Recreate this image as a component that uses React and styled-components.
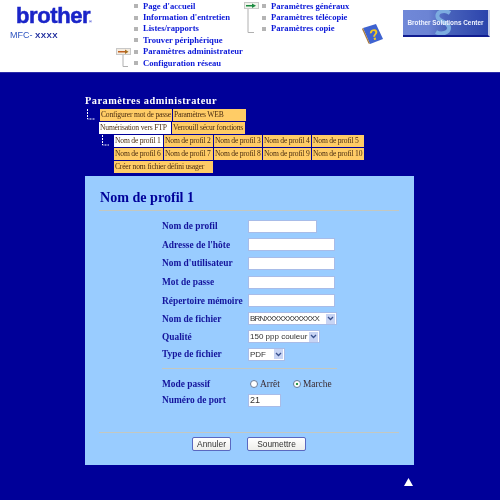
import React from "react";
import styled, { createGlobalStyle } from "styled-components";

const Global = createGlobalStyle`
  html, body { margin: 0; padding: 0; background: #000099; }
  body { width: 500px; height: 500px; overflow: hidden; font-family: "Liberation Serif", serif; }
  * { box-sizing: border-box; }
`;
const Page = styled.div`width: 500px; height: 500px; background: #000099; display: flex; flex-direction: column; filter: blur(0.3px);`;
const Header = styled.header`height: 73px; background: #fff; border-bottom: 1px solid #2a2aa8; display: flex; flex: none;`;
const Brand = styled.div`width: 116px; padding: 4px 0 0 16px; flex: none;`;
const LogoText = styled.div`font: bold 22px/24px "Liberation Sans", sans-serif; color: #1a24c8; letter-spacing: -0.4px; -webkit-text-stroke: 0.5px #1a24c8; position: relative; width: 72px;`;
const Registered = styled.span`position: absolute; left: 73px; top: 15px; font: bold 4px/6px "Liberation Sans", sans-serif; letter-spacing: 0; -webkit-text-stroke: 0;`;
const Model = styled.div`margin: 1px 0 0 -6px; font: 9px/12px "Liberation Sans", sans-serif; color: #2f55c0; white-space: nowrap; b { color: #1c2a9c; font-weight: bold; font-size: 8px; letter-spacing: 0.4px; }`;
const NavCol = styled.nav`width: ${p => p.$w}px; flex: none; padding-top: 0.5px;`;
const NavRow = styled.div`height: 11.4px; display: flex; align-items: center; white-space: nowrap;`;
const Gutter = styled.span`width: 14px; height: 8px; margin-right: 4px; flex: none; display: block;
  svg { display: block; overflow: visible; }`;
const Bullet = styled.span`width: 4px; height: 4px; background: #b4b4b4; margin-right: 5px; flex: none;`;
const NavLink = styled.span`font: bold 8.6px/11px "Liberation Serif", serif; color: #0b18d8;`;
const Extras = styled.div`flex: 1; display: flex; align-items: flex-start;`;
const Book = styled.svg`margin: 23px 19px 0 0; flex: none;`;
const Banner = styled.div`width: 87px; height: 27px; margin-top: 10px; flex: none; position: relative; overflow: hidden;
  background: linear-gradient(90deg, #7088d8 0%, #6c84d4 30%, #4a64bc 50%, #2c44ac 100%);
  border-right: 2px solid #c4cce8; border-bottom: 2px solid #101c90;
  display: flex; align-items: center; justify-content: center;
  font: bold 6.4px/8px "Liberation Sans", sans-serif; color: #f0f4ff; white-space: nowrap;
  span { position: relative; }
  svg { position: absolute; left: 27px; top: 0; }`;
const Main = styled.main`padding: 21px 0 0 85px; flex: 1;`;
const PageTitle = styled.h1`margin: 0 0 2px; font: bold 10.3px/13px "Liberation Serif", serif; color: #fff; letter-spacing: 0.5px;`;
const TabRow = styled.div`display: flex; align-items: flex-start; height: 13px; padding-left: ${p => p.$indent}px; gap: 1px;`;
const Connector = styled.svg`flex: none; margin-left: ${p => p.$m}px; margin-right: ${p => p.$r}px; display: block;`;
const Tab = styled.div`width: ${p => p.$w}px; height: 12px; flex: none; padding-left: 1px;
  background: ${p => (p.$active ? "#fff" : "#ffcc66")}; color: #4a2c10;
  font: 7.6px/12px "Liberation Serif", serif; letter-spacing: -0.2px; white-space: nowrap;`;
const Panel = styled.section`margin-top: 2px; width: 329px; height: 289px; background: #99ccff; padding: 12px 15px 0 14px;`;
const PanelTitle = styled.h2`margin: 0; font: bold 14.1px/18px "Liberation Serif", serif; color: #000099; padding-left: 1px;`;
const Rule = styled.hr`margin: ${p => p.$m || "0"}; width: ${p => p.$w || 300}px; height: 1px; border: 0; background: #c4c8c0;`;
const Form = styled.div`padding-left: 63px; margin-top: 6px;`;
const Row = styled.div`display: flex; align-items: center; height: ${p => p.$h}px;`;
const Label = styled.label`width: 86px; flex: none; font: bold 9.4px/12px "Liberation Serif", serif; color: #14149c;`;
const Input = styled.input`width: ${p => p.$w}px; height: 13px; padding: 0 1px; border: 1px solid #a8bce8; background: #fff; font: 9px "Liberation Sans", sans-serif; color: #333; outline: 0; display: block;`;
const SelectBox = styled.div`width: ${p => p.$w}px; height: 13px; border: 1px solid #a8bce8; background: #fff; display: flex; align-items: center; justify-content: space-between; padding: 0 1px;`;
const SelectText = styled.span`font: 8px/11px "Liberation Sans", sans-serif; color: #333; letter-spacing: ${p => p.$ls || 0}px; white-space: nowrap;`;
const Arrow = styled.span`width: 9px; height: 10px; background: #c8d4f4; display: flex; align-items: center; justify-content: center; flex: none;`;
const Radios = styled.div`display: flex; align-items: center; padding-left: 2px;`;
const Radio = styled.span`width: 8px; height: 8px; border-radius: 50%; border: 1px solid #6c7c98; background: ${p => (p.$on ? "radial-gradient(circle, #2a9a4a 0 1.2px, #fff 1.6px)" : "#fff")}; flex: none; margin-right: 2px;`;
const RadioText = styled.span`font: 9.4px/12px "Liberation Serif", serif; color: #3a2a30; width: ${p => p.$w}px;`;
const Buttons = styled.div`display: flex; gap: 16px; padding-left: 93px; margin-top: 4px;`;
const Button = styled.button`width: ${p => p.$w}px; height: 14px; padding: 0; border: 1px solid #5a68c0; border-radius: 2px; background: linear-gradient(#fff, #eeeeea); font: 8.4px/12px "Liberation Sans", sans-serif; color: #333;`;
const Foot = styled.div`padding: 13px 0 0 319px; line-height: 0;`;

const Pager = () => (
  <svg width="14" height="8" viewBox="0 0 14 8"><rect x="0.5" y="0.5" width="14" height="6" fill="#f4ece0" stroke="#c8c8c8"/><rect x="2" y="3" width="8" height="1.5" fill="#c06020"/><path d="M9 1.5L12.5 3.7 9 6z" fill="#a87020"/><path d="M7 7V18.5H12" fill="none" stroke="#b0b0b0"/></svg>
);
const PagerGreen = () => (
  <svg width="14" height="8" viewBox="0 0 14 8"><rect x="0.5" y="0.5" width="14" height="6" fill="#eef4ea" stroke="#c8c8c8"/><rect x="2" y="3" width="7" height="1.5" fill="#1a8a40"/><path d="M8 1.5L12 3.7 8 6z" fill="#1a8a40"/><path d="M4 7V30.5H10" fill="none" stroke="#b0b0b0"/></svg>
);
const Item = ({ icon, children }) => (
  <NavRow><Gutter>{icon}</Gutter><Bullet /><NavLink>{children}</NavLink></NavRow>
);
const Chev = () => <svg width="7" height="5" viewBox="0 0 7 5"><path d="M1 1l2.5 2.5L6 1" fill="none" stroke="#38508c" strokeWidth="1.3"/></svg>;
const Sel = ({ w, children, ls }) => <SelectBox $w={w}><SelectText $ls={ls}>{children}</SelectText><Arrow><Chev /></Arrow></SelectBox>;

export default function App() {
  return (
    <Page>
      <Global />
      <Header>
        <Brand>
          <LogoText>brother<Registered>®</Registered></LogoText>
          <Model>MFC-<b> XXXX</b></Model>
        </Brand>
        <NavCol $w={128}>
          <Item>Page d'accueil</Item>
          <Item>Information d'entretien</Item>
          <Item>Listes/rapports</Item>
          <Item>Trouver périphérique</Item>
          <Item icon={<Pager />}>Paramètres administrateur</Item>
          <Item>Configuration réseau</Item>
        </NavCol>
        <NavCol $w={118}>
          <Item icon={<PagerGreen />}>Paramètres généraux</Item>
          <Item>Paramètres télécopie</Item>
          <Item>Paramètres copie</Item>
        </NavCol>
        <Extras>
          <Book width="22" height="22" viewBox="0 0 22 22">
            <path d="M1 5L14 1l7 15-13 5z" fill="#3f63d0"/>
            <path d="M1 5l7 16-1.5-0.5L0 6z" fill="#a87838"/>
            <text x="7.5" y="17" transform="rotate(-14 11 11)" fontFamily="Liberation Sans" fontWeight="bold" fontSize="15" fill="#f4c820">?</text>
          </Book>
          <Banner>
            <svg width="26" height="26" viewBox="0 0 26 26"><path d="M20 3C14-1 5 2 8 8c2 4 11 4 11 10 0 5-8 7-13 4" fill="none" stroke="#7cace0" strokeWidth="4"/></svg>
            <span>Brother Solutions Center</span>
          </Banner>
        </Extras>
      </Header>
      <Main>
        <PageTitle>Paramètres administrateur</PageTitle>
        <TabRow $indent={0}>
          <Connector $m={2} $r={4} width="8" height="12" viewBox="0 0 8 12"><path d="M0.5 0V10H8" fill="none" stroke="#fff" strokeWidth="1" strokeDasharray="2 1"/></Connector>
          <Tab $w={72}>Configurer mot de passe</Tab>
          <Tab $w={73}>Paramètres WEB</Tab>
        </TabRow>
        <TabRow $indent={14}>
          <Tab $w={72} $active>Numérisation vers FTP</Tab>
          <Tab $w={73}>Verrouill sécur fonctions</Tab>
        </TabRow>
        <TabRow $indent={0}>
          <Connector $m={17} $r={4} width="7" height="12" viewBox="0 0 7 12"><path d="M0.5 0V10H7" fill="none" stroke="#fff" strokeWidth="1" strokeDasharray="2 1"/></Connector>
          <Tab $w={49} $active>Nom de profil 1</Tab>
          <Tab $w={49}>Nom de profil 2</Tab>
          <Tab $w={48}>Nom de profil 3</Tab>
          <Tab $w={48}>Nom de profil 4</Tab>
          <Tab $w={52}>Nom de profil 5</Tab>
        </TabRow>
        <TabRow $indent={29}>
          <Tab $w={49}>Nom de profil 6</Tab>
          <Tab $w={49}>Nom de profil 7</Tab>
          <Tab $w={48}>Nom de profil 8</Tab>
          <Tab $w={48}>Nom de profil 9</Tab>
          <Tab $w={52}>Nom de profil 10</Tab>
        </TabRow>
        <TabRow $indent={29}>
          <Tab $w={99}>Créer nom fichier défini usager</Tab>
        </TabRow>
        <Panel>
          <PanelTitle>Nom de profil 1</PanelTitle>
          <Rule $m="4px 0 0" />
          <Form>
            <Row $h={18.6}><Label>Nom de profil</Label><Input $w={69} /></Row>
            <Row $h={18.6}><Label>Adresse de l'hôte</Label><Input $w={87} /></Row>
            <Row $h={18.6}><Label>Nom d'utilisateur</Label><Input $w={87} /></Row>
            <Row $h={18.6}><Label>Mot de passe</Label><Input $w={87} /></Row>
            <Row $h={18.6}><Label>Répertoire mémoire</Label><Input $w={87} /></Row>
            <Row $h={18}><Label>Nom de fichier</Label><Sel w={89} ls={-0.8}>BRNXXXXXXXXXXXX</Sel></Row>
            <Row $h={17.5}><Label>Qualité</Label><Sel w={72}>150 ppp couleur</Sel></Row>
            <Row $h={17.5}><Label>Type de fichier</Label><Sel w={37}>PDF</Sel></Row>
            <Rule $w={175} $m="5px 0 7px" />
            <Row $h={16}>
              <Label>Mode passif</Label>
              <Radios>
                <Radio /><RadioText $w={33}>Arrêt</RadioText>
                <Radio $on /><RadioText $w={40}>Marche</RadioText>
              </Radios>
            </Row>
            <Row $h={17}><Label>Numéro de port</Label><Input $w={33} defaultValue="21" /></Row>
          </Form>
          <Rule $m="23px 0 0" />
          <Buttons>
            <Button $w={39}>Annuler</Button>
            <Button $w={59}>Soumettre</Button>
          </Buttons>
        </Panel>
        <Foot>
          <svg width="9" height="8" viewBox="0 0 9 8"><path d="M4.5 0L9 8H0z" fill="#fff"/></svg>
        </Foot>
      </Main>
    </Page>
  );
}
